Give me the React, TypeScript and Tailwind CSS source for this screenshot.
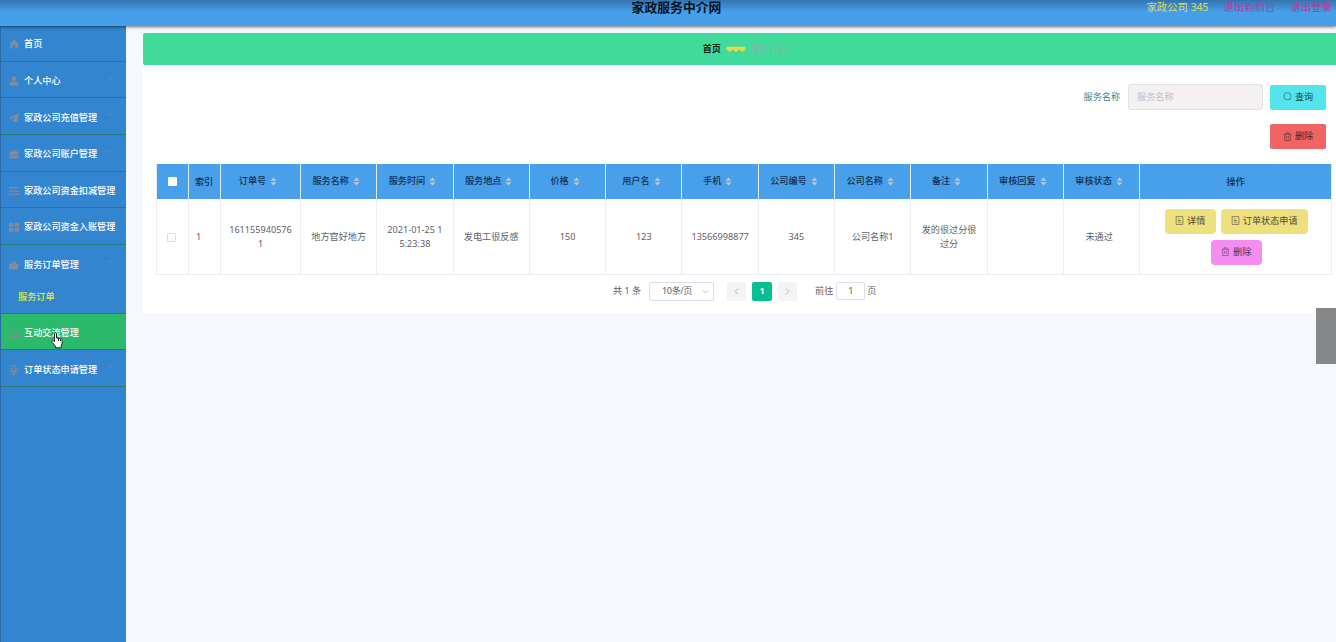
import React from "react";

const ICONS: Record<string, React.ReactNode> = {
  home: <path d="M8 1 0 8.500h2V15h4v-5h4v5h4V8.500h2z" />,
  user: <path d="M8 0.500a3.800 3.800 0 1 1 0 7.600 3.800 3.800 0 0 1 0-7.600zM1 15v-3c0-2 2-3 4-3h6c2 0 4 1 4 3v3z" />,
  send: <path d="M16 0 0 8l4.500 2.500L12 4l-5.500 7.500V16l2.500-3 4 2z" />,
  bag: <path d="M4.500 4V1h7v3H15v5H1V4zM6 4h4V2.500H6zM1 10.200h14V15H1z" />,
  menu: <path d="M0 1.500h16v2H0zM0 7h16v2H0zM0 12.500h16v2H0z" />,
  grid: <path d="M0 1h7v6H0zM9 1h7v6H9zM0 9h7v6H0zM9 9h7v6H9z" />,
  ticket: <path d="M0 6h4l5-5 2.500 2-1 3H15l1 2-1.500 2v5H0z" />,
  mic: <path d="M5.500 1h5v9h-5zM3 5v6.500h10V5M8 12v3M4 15.200h8" fill="none" stroke="currentColor" strokeWidth="1.500" />,
};

function Icon({ name }: { name: string }) {
  return (
    <svg viewBox="0 0 16 16" fill="currentColor" className="h-[10px] w-[10px] shrink-0 text-[#858b99]">
      {ICONS[name]}
    </svg>
  );
}

function Chevron({ up = false, className = "" }: { up?: boolean; className?: string }) {
  return (
    <svg viewBox="0 0 10 10" fill="none" stroke="currentColor" strokeWidth="1.200" className={"h-[7px] w-[7px] shrink-0 " + className}>
      <path d={up ? "M1 7l4-4 4 4" : "M1 3l4 4 4-4"} />
    </svg>
  );
}

function MenuItem({ icon, label, arrow, first, active, open }: { icon: string; label: string; arrow?: boolean; first?: boolean; active?: boolean; open?: boolean }) {
  return (
    <li
      className={
        "flex items-center pl-[8px] " +
        (first ? "h-[35.800px] pt-[2px] " : "h-[36.600px] pt-[3px] ") +
        (active ? "bg-[#2bb96b] " : "") +
        (open ? "" : "border-b border-[#2c7a78]")
      }
    >
      <Icon name={icon} />
      <span className="ml-[5px] font-medium whitespace-nowrap text-white">{label}</span>
      {arrow && (
        <Chevron up={open} className={"mt-[-6px] mr-[13px] ml-auto " + (active ? "text-[#4fa07c]" : "text-[#5f95c8]")} />
      )}
    </li>
  );
}

function Doc() {
  return (
    <svg viewBox="0 0 16 16" fill="none" stroke="currentColor" strokeWidth="1.300" className="h-[9px] w-[9px] shrink-0 opacity-80">
      <path d="M2 1h12v14H2zM5 5h3M5 8h6M5 11h6" />
    </svg>
  );
}

function Trash() {
  return (
    <svg viewBox="0 0 16 16" fill="none" stroke="currentColor" strokeWidth="1.200" className="h-[9px] w-[9px] shrink-0 opacity-80">
      <path d="M1 4h14M3 4v11h10V4M5.500 4V1.500h5V4M6.500 7v5M9.500 7v5" />
    </svg>
  );
}

const COLUMNS = ["订单号", "服务名称", "服务时间", "服务地点", "价格", "用户名", "手机", "公司编号", "公司名称", "备注", "审核回复", "审核状态"];
const VALUES = ["1611559405761", "地方官好地方", "2021-01-25 15:23:38", "发电工很反感", "150", "123", "13566998877", "345", "公司名称1", "发的很过分很过分", "", "未通过"];

function Th({ children, className = "" }: { children?: React.ReactNode; className?: string }) {
  return <div className={"flex items-center justify-center border-r border-[#dcecf8] font-medium " + className}>{children}</div>;
}

function Td({ children, className = "" }: { children?: React.ReactNode; className?: string }) {
  return <div className={"flex items-center justify-center border-r border-[#ebeef5] text-center " + className}>{children}</div>;
}

const GRID = "grid grid-cols-[32px_32px_80px_repeat(11,76.300px)_1fr]";

export default function App() {
  return (
    <div className="flex h-[642px] w-[1336px] flex-col overflow-hidden bg-[#f6f8fd] font-['Noto_Sans','Noto_Sans_CJK_SC',sans-serif] text-[9.150px] leading-[14px] text-[#606266]">
      <header className="relative z-10 flex h-[26px] shrink-0 items-start bg-[linear-gradient(#3474ae_0px,#3c86c8_5px,#489fe9_12px,#489fe9_100%)] shadow-[0_1px_3px_rgba(0,0,0,0.55)]">
        <div className="flex-1" />
        <h1 className="pl-[21px] text-[12.850px] leading-[15px] font-bold text-[#07121f]">家政服务中介网</h1>
        <div className="flex flex-1 justify-end pr-[4px] text-[10.400px] leading-[14px]">
          <span className="text-[#d3e05c]">家政公司 345</span>
          <span className="ml-[15px] text-[#a8429f]">退出到前台</span>
          <span className="ml-[15px] text-[#a8429f]">退出登录</span>
        </div>
      </header>

      <div className="flex min-h-0 flex-1">
        <aside className="w-[126px] shrink-0 border-l border-[#286ba8] bg-[#3385cf]">
          <ul>
            <MenuItem icon="home" label="首页" first />
            <MenuItem icon="user" label="个人中心" arrow />
            <MenuItem icon="send" label="家政公司充值管理" arrow />
            <MenuItem icon="bag" label="家政公司账户管理" arrow />
            <MenuItem icon="menu" label="家政公司资金扣减管理" />
            <MenuItem icon="grid" label="家政公司资金入账管理" />
            <MenuItem icon="ticket" label="服务订单管理" arrow open />
            <li className="flex h-[32.400px] items-center border-b border-[#2c7a78] pl-[17px] font-medium text-[#dfe94d]">服务订单</li>
            <MenuItem icon="menu" label="互动交流管理" arrow active />
            <MenuItem icon="mic" label="订单状态申请管理" arrow />
          </ul>
        </aside>

        <main className="min-w-0 flex-1 pt-[7px] pl-[17px]">
          <nav className="flex h-[32px] items-center justify-center rounded-l-[2px] bg-[#40db9b]">
            <div className="flex items-center pl-[11px]">
              <span className="font-bold text-[#12281f]">首页</span>
              <svg viewBox="0 0 21 6" className="mx-[5px] h-[6px] w-[20px]" fill="#e6d94c">
                <path d="M0.500 2.500C.5 0 3 0 3.800 1 4.500 0 6.500 0 7.200 1c.8-1 2.600-1 3.300 0 .8-1 2.600-1 3.400 0 .7-1 2.600-1 3.300 0 .9-1 3.300-1 3.300 1.500 0 1.200-1.300 2.300-3.300 3.500-1.700-1-2.700-1.700-3.300-2.600-.6.900-1.700 1.600-3.400 2.600-1.700-1-2.700-1.700-3.300-2.600C6.500 4.300 5.500 5 3.800 6 1.800 4.800.5 3.700.5 2.500z" />
              </svg>
              <span className="text-[#83b3ad]">服务订单</span>
            </div>
          </nav>

          <section className="mt-[5px] h-[243px] bg-white pl-[13px]">
            <div className="flex items-center justify-end pt-[14px] pr-[10px]">
              <label className="text-[#3c8590]">服务名称</label>
              <input
                placeholder="服务名称"
                className="ml-[8px] h-[26px] w-[135px] rounded-[3px] border border-[#dfe1e9] bg-[#f5f0f1] px-[8px] pb-[2px] placeholder:text-[#bcc0cb]"
              />
              <button className="ml-[7px] flex h-[25px] w-[56px] items-center justify-center gap-[3px] rounded-[2px] bg-[#53e5eb] pb-px text-[#263f45]">
                <svg viewBox="0 0 16 16" fill="none" stroke="currentColor" strokeWidth="1.200" className="h-[9px] w-[9px] opacity-80">
                  <circle cx="8" cy="7.500" r="6.300" />
                  <path d="M11.500 12.500l2 2" />
                </svg>
                查询
              </button>
            </div>
            <div className="mt-[14px] flex justify-end pr-[10px]">
              <button className="flex h-[25px] w-[56px] items-center justify-center gap-[3px] rounded-[2px] bg-[#f06464] pb-px text-[#4b2227]">
                <Trash />
                删除
              </button>
            </div>

            <div className="mt-[15px] w-[1176px] border-l border-[#ebeef5]">
              <div className={GRID + " h-[35px] bg-[#489fea] text-[#123052]"}>
                <Th>
                  <span className="h-[9px] w-[9px] rounded-[1px] bg-white" />
                </Th>
                <Th className="pr-px">索引</Th>
                {COLUMNS.map((c) => (
                  <Th key={c} className="pr-[5px] pb-px">
                    {c}
                    <svg viewBox="0 0 8 10" fill="#b9c9dc" className="ml-[4px] h-[9px] w-[7px]">
                      <path d="M4 0.500l3.500 3.700h-7zM4 9.500L.5 5.800h7z" />
                    </svg>
                  </Th>
                ))}
                <Th>操作</Th>
              </div>
              <div className={GRID + " h-[76px] border-b border-[#ebeef5]"}>
                <Td className="pt-[2px] pr-[2px]">
                  <span className="h-[9px] w-[9px] rounded-[1px] border border-[#dcdfe6]" />
                </Td>
                <Td className="justify-start! pt-px pl-[7px]">1</Td>
                {VALUES.map((v, i) => (
                  <Td key={i} className={"pt-px break-all " + (i === 11 ? "pr-[12px] pl-[7px]" : "px-[7px]")}>
                    {v}
                  </Td>
                ))}
                <Td className="flex-wrap content-center gap-x-[5px] gap-y-[6px] pl-px text-[#4b4a35]">
                  <button className="flex h-[25px] w-[51px] items-center justify-center gap-[3px] rounded-[4px] bg-[#eedf7f] pb-px">
                    <Doc />
                    详情
                  </button>
                  <button className="flex h-[25px] w-[87px] items-center justify-center gap-[3px] rounded-[4px] bg-[#eedf7f] pb-px">
                    <Doc />
                    订单状态申请
                  </button>
                  <button className="flex h-[25px] w-[51px] items-center justify-center gap-[3px] rounded-[4px] bg-[#f58df0] pb-px text-[#533150]">
                    <Trash />
                    删除
                  </button>
                </Td>
              </div>
            </div>

            <div className="mt-[6px] flex h-[20px] items-center pl-[457px]">
              <span className="w-[28px] whitespace-nowrap">共 1 条</span>
              <div className="ml-[8px] flex h-[19px] w-[65px] items-center rounded-[2px] border border-[#dcdfe6] pl-[12px] tracking-[-0.4px]">
                10条/页
                <Chevron className="mr-[4px] ml-auto text-[#b4b8c0]" />
              </div>
              <span className="ml-[13px] flex h-[19px] w-[19px] items-center justify-center rounded-[2px] bg-[#f4f4f6] text-[#a9adb6]">
                <Chevron className="rotate-90" />
              </span>
              <span className="ml-[6px] flex h-[19px] w-[20px] items-center justify-center rounded-[2px] bg-[#08bf93] font-bold text-white">1</span>
              <span className="ml-[6px] flex h-[19px] w-[19px] items-center justify-center rounded-[2px] bg-[#f4f4f6] text-[#a9adb6]">
                <Chevron className="-rotate-90" />
              </span>
              <span className="ml-[18px]">前往</span>
              <span className="ml-[3px] flex h-[18px] w-[29px] items-center justify-center rounded-[2px] border border-[#dcdfe6]">1</span>
              <span className="ml-[2px]">页</span>
            </div>
          </section>
        </main>
      </div>

      <div className="absolute top-[308px] left-[1316px] h-[56px] w-[20px] bg-[#868788]" />
      <svg viewBox="0 0 12 17" className="absolute top-[332px] left-[51px] h-[17px] w-[12px]" fill="white" stroke="#222" strokeWidth="1">
        <path d="M3.500 9.500V1.800c0-1.500 2-1.500 2 0V6l4 .8c1.200.3 1.700 1 1.700 2v2.500l-1 2.500v2H4.500v-1.500L1 10.300c-.8-1.200.5-2 1.400-1.400zM7.500 6.800v2M9.500 7.200v2" />
      </svg>
    </div>
  );
}
